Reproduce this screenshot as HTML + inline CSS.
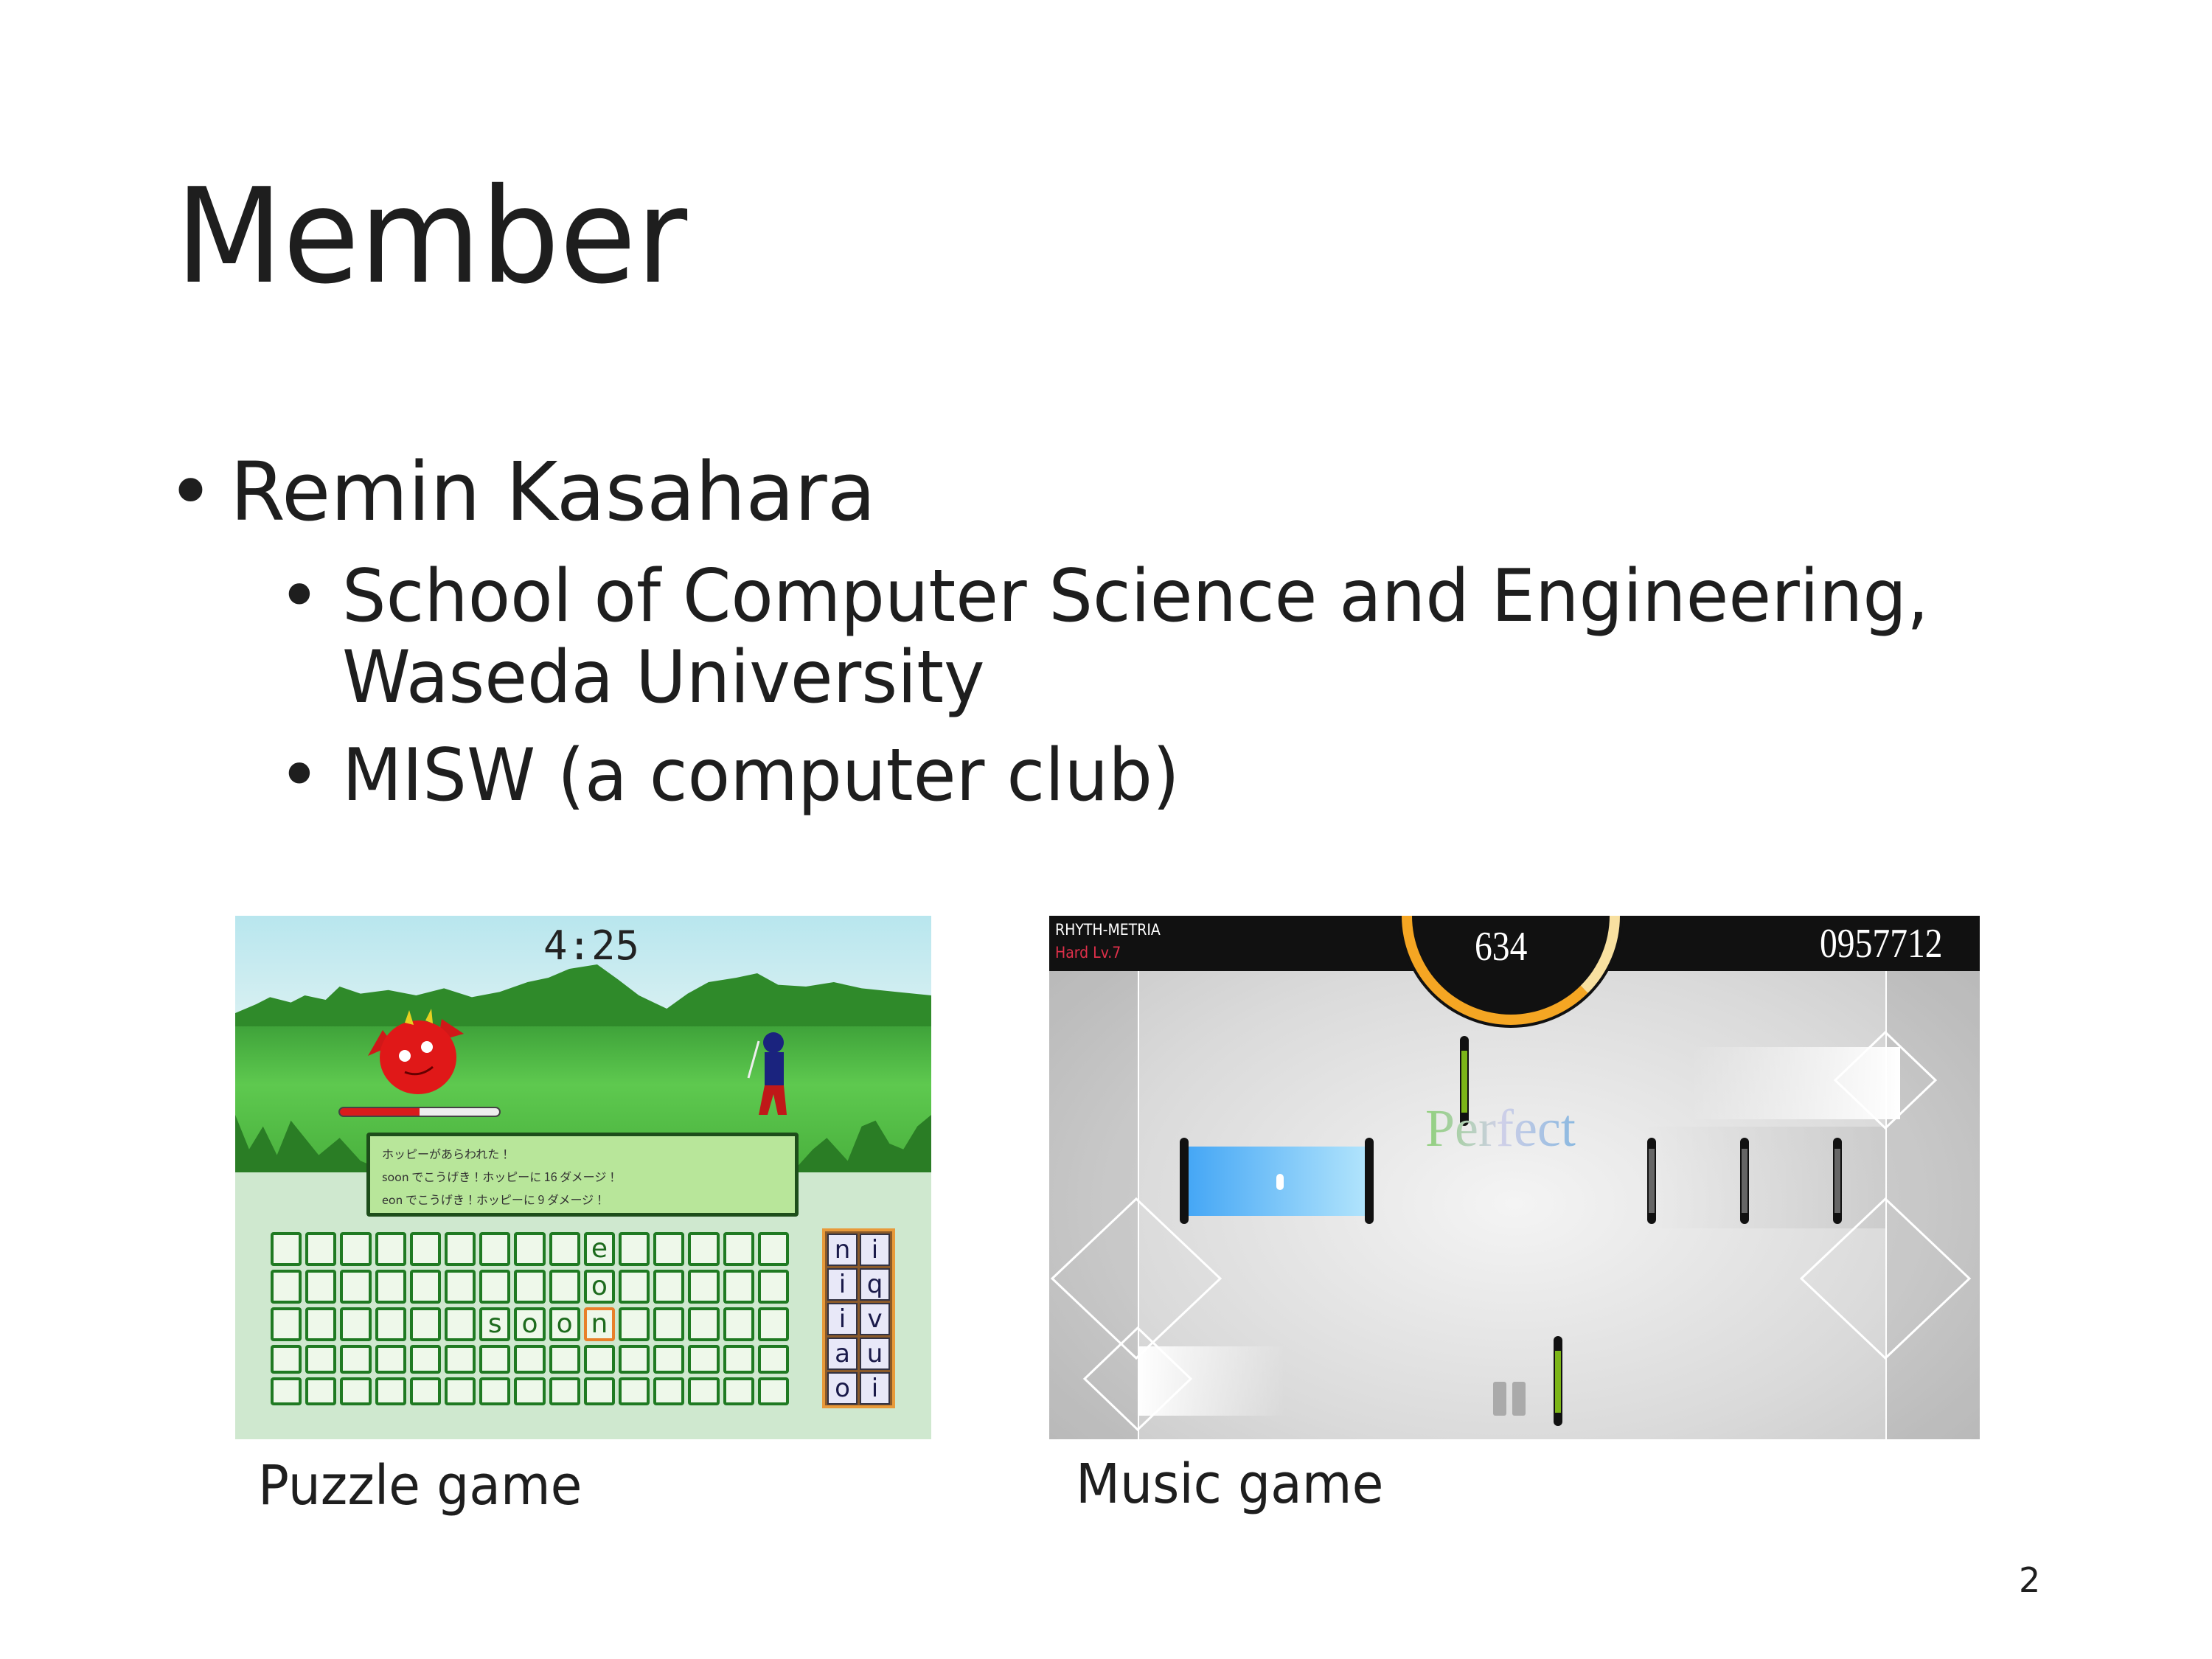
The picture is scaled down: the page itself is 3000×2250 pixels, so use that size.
<!DOCTYPE html>
<html><head><meta charset="utf-8"><style>
*{margin:0;padding:0;box-sizing:border-box}
body{width:3000px;height:2250px;background:#fff;position:relative;overflow:hidden;font-family:"DejaVu Sans","Liberation Sans",sans-serif;color:#1e1e1e}
.t{position:absolute;white-space:nowrap;line-height:1;transform-origin:left top}
.abs{position:absolute}
.c{background:#eef8ea;border:4px solid #1f7a22;border-radius:4px}
</style></head><body>
<div class="t" style="left:238px;top:232px;font-size:178px;transform:scaleX(.948)">Member</div>
<div class="t" style="left:226px;top:612px;font-size:110px">•</div>
<div class="t" style="left:312px;top:612px;font-size:110px;transform:scaleX(.98)">Remin Kasahara</div>
<div class="t" style="left:377px;top:760px;font-size:98px">•</div>
<div class="t" style="left:464px;top:760px;font-size:98px;transform:scaleX(.958)">School of Computer Science and Engineering,</div>
<div class="t" style="left:464px;top:870px;font-size:98px;transform:scaleX(.958)">Waseda University</div>
<div class="t" style="left:377px;top:1003px;font-size:98px">•</div>
<div class="t" style="left:464px;top:1003px;font-size:98px;transform:scaleX(.962)">MISW (a computer club)</div>

<!-- Puzzle game -->
<div class="abs" style="left:319px;top:1242px;width:944px;height:710px;overflow:hidden;background:#cfe8cf">
 <div class="abs" style="left:0;top:0;width:944px;height:140px;background:linear-gradient(#b8e6ee,#d8f0f2)"></div>
 <div class="abs" style="left:0;top:60px;width:944px;height:120px;background:#2f8a2a;clip-path:polygon(0 60%,3% 50%,5% 42%,8% 48%,10% 40%,13% 45%,15% 30%,18% 38%,22% 34%,26% 40%,30% 32%,34% 42%,38% 36%,42% 25%,45% 20%,48% 10%,52% 5%,55% 22%,58% 40%,62% 55%,65% 38%,68% 25%,72% 20%,75% 15%,78% 28%,82% 30%,86% 25%,90% 32%,95% 36%,100% 40%,100% 100%,0 100%)"></div>
 <div class="abs" style="left:0;top:150px;width:944px;height:198px;background:linear-gradient(#3fa33a,#5ec94f 40%,#49b03d)"></div>
 <div class="abs" style="left:0;top:270px;width:944px;height:78px;background:#2a7d25;clip-path:polygon(0 0,2% 60%,4% 20%,6% 70%,8% 10%,12% 70%,15% 40%,18% 80%,22% 100%,80% 100%,83% 60%,85% 40%,88% 80%,90% 20%,92% 10%,94% 50%,96% 60%,98% 20%,100% 0,100% 100%,0 100%)"></div>
 <div class="t abs" style="left:418px;top:14px;font-size:54px;font-family:'DejaVu Sans Mono',monospace;color:#222">4:25</div>
 <svg class="abs" style="left:170px;top:120px" width="150" height="130">
  <path d="M10 70 L30 35 L45 55 Z M140 40 L110 20 L105 50 Z" fill="#d01818"/>
  <ellipse cx="78" cy="72" rx="52" ry="50" fill="#e01818"/>
  <path d="M60 25 L66 8 L72 28 Z M88 22 L96 6 L98 26 Z" fill="#e8d020"/>
  <circle cx="60" cy="70" r="8" fill="#fff"/><circle cx="90" cy="58" r="8" fill="#fff"/>
  <path d="M60 92 Q80 100 98 85" stroke="#600" stroke-width="3" fill="none"/>
 </svg>
 <div class="abs" style="left:140px;top:259px;width:220px;height:14px;border-radius:7px;background:linear-gradient(90deg,#d81c1c 50%,#eee 50%);border:2px solid #444"></div>
 <svg class="abs" style="left:690px;top:150px" width="70" height="130">
  <path d="M20 20 L6 70" stroke="#eee" stroke-width="3"/>
  <circle cx="40" cy="22" r="14" fill="#1a237e"/>
  <rect x="28" y="35" width="26" height="45" fill="#1a237e"/>
  <path d="M28 80 L20 120 L32 120 L40 92 L46 120 L58 120 L54 80 Z" fill="#c01818"/>
 </svg>
 <div class="abs" style="left:178px;top:294px;width:586px;height:114px;background:#b8e69a;border:5px solid #1d4d1a;border-radius:4px;font-family:'Noto Sans CJK JP',sans-serif;font-size:16px;color:#333;padding:8px 16px;line-height:31px">ホッピーがあらわれた！<br>soon でこうげき！ホッピーに 16 ダメージ！<br>eon でこうげき！ホッピーに 9 ダメージ！</div>
 <div class="abs" style="left:796px;top:424px;width:99px;height:244px;background:#8a5a2a;border:4px solid #e89a3a;padding:3px;display:grid;grid-template-columns:1fr 1fr;grid-template-rows:repeat(5,1fr);gap:3px;font-size:34px;text-align:center;line-height:40px;color:#1a1a4a">
  <div style="background:#e8e8f8;border:2px solid #334">n</div><div style="background:#e8e8f8;border:2px solid #334">i</div>
  <div style="background:#e8e8f8;border:2px solid #334">i</div><div style="background:#e8e8f8;border:2px solid #334">q</div>
  <div style="background:#e8e8f8;border:2px solid #334">i</div><div style="background:#e8e8f8;border:2px solid #334">v</div>
  <div style="background:#e8e8f8;border:2px solid #334">a</div><div style="background:#e8e8f8;border:2px solid #334">u</div>
  <div style="background:#e8e8f8;border:2px solid #334">o</div><div style="background:#e8e8f8;border:2px solid #334">i</div>
 </div>
</div>
<div class="abs" style="left:367px;top:1671px;width:703px;height:235px;display:grid;grid-template-columns:repeat(15,1fr);grid-template-rows:repeat(5,1fr);gap:5px;font-size:36px;color:#1d6b1d;text-align:center;line-height:38px">
<div class="c"></div><div class="c"></div><div class="c"></div><div class="c"></div><div class="c"></div><div class="c"></div><div class="c"></div><div class="c"></div><div class="c"></div><div class="c">e</div><div class="c"></div><div class="c"></div><div class="c"></div><div class="c"></div><div class="c"></div>
<div class="c"></div><div class="c"></div><div class="c"></div><div class="c"></div><div class="c"></div><div class="c"></div><div class="c"></div><div class="c"></div><div class="c"></div><div class="c">o</div><div class="c"></div><div class="c"></div><div class="c"></div><div class="c"></div><div class="c"></div>
<div class="c"></div><div class="c"></div><div class="c"></div><div class="c"></div><div class="c"></div><div class="c"></div><div class="c">s</div><div class="c">o</div><div class="c">o</div><div class="c" style="border-color:#e8802a">n</div><div class="c"></div><div class="c"></div><div class="c"></div><div class="c"></div><div class="c"></div>
<div class="c"></div><div class="c"></div><div class="c"></div><div class="c"></div><div class="c"></div><div class="c"></div><div class="c"></div><div class="c"></div><div class="c"></div><div class="c"></div><div class="c"></div><div class="c"></div><div class="c"></div><div class="c"></div><div class="c"></div>
<div class="c"></div><div class="c"></div><div class="c"></div><div class="c"></div><div class="c"></div><div class="c"></div><div class="c"></div><div class="c"></div><div class="c"></div><div class="c"></div><div class="c"></div><div class="c"></div><div class="c"></div><div class="c"></div><div class="c"></div>
</div>

<!-- Music game -->
<div class="abs" style="left:1423px;top:1242px;width:1262px;height:710px;overflow:hidden;background:radial-gradient(ellipse at 50% 55%,#f4f4f4,#dadada 60%,#c4c4c4)">
 <div class="abs" style="left:0;top:0;width:120px;height:710px;background:rgba(0,0,0,0.08)"></div>
 <div class="abs" style="left:1134px;top:0;width:128px;height:710px;background:rgba(0,0,0,0.08)"></div>
 <div class="abs" style="left:120px;top:0;width:2px;height:710px;background:#fff"></div>
 <div class="abs" style="left:1134px;top:0;width:2px;height:710px;background:#fff"></div>
 <div class="abs" style="left:800px;top:286px;width:334px;height:138px;background:linear-gradient(90deg,rgba(0,0,0,0),rgba(0,0,0,0.07))"></div>
 <div class="abs" style="left:870px;top:178px;width:284px;height:98px;background:linear-gradient(90deg,rgba(255,255,255,0),#fff)"></div>
 <div class="abs" style="left:120px;top:584px;width:200px;height:94px;background:linear-gradient(90deg,#fff,rgba(255,255,255,0))"></div>
 <svg class="abs" style="left:0;top:0" width="1262" height="710" fill="none" stroke="#fff" stroke-width="3">
  <path d="M4 492 L118 384 L232 492 L118 600 Z"/>
  <path d="M1020 492 L1134 384 L1248 492 L1134 600 Z"/>
  <path d="M1066 223 L1134 158 L1202 223 L1134 288 Z"/>
  <path d="M48 628 L120 559 L192 628 L120 697 Z"/>
 </svg>
 <div class="abs" style="left:0;top:0;width:1262px;height:75px;background:#111"></div>
 <div class="abs" style="left:478px;top:-148px;width:296px;height:296px;border-radius:50%;background:#111;border:14px solid #f5a623;border-right-color:#f8e0a0;box-shadow:0 0 0 4px #111"></div>
 <div class="t abs" style="left:8px;top:9px;font-size:21px;color:#fff;font-family:'DejaVu Sans Condensed','DejaVu Sans',sans-serif">RHYTH-METRIA</div>
 <div class="t abs" style="left:8px;top:40px;font-size:21px;color:#e0304a;font-family:'DejaVu Sans Condensed','DejaVu Sans',sans-serif">Hard Lv.7</div>
 <div class="t abs" style="left:577px;top:14px;font-size:56px;color:#fff;font-family:'Liberation Serif',serif;transform:scaleX(.85)">634</div>
 <div class="t abs" style="left:1045px;top:10px;font-size:56px;color:#fff;font-family:'Liberation Serif',serif;transform:scaleX(.85)">0957712</div>
 <div class="abs" style="left:182px;top:313px;width:252px;height:94px;background:linear-gradient(90deg,#42a5f5,#b3e5fc)"></div>
 <div class="abs" style="left:177px;top:301px;width:12px;height:117px;background:#111;border-radius:6px"></div>
 <div class="abs" style="left:428px;top:301px;width:12px;height:117px;background:#111;border-radius:6px"></div>
 <div class="abs" style="left:308px;top:350px;width:10px;height:22px;background:#fff;border-radius:5px"></div>
 <div class="abs" style="left:557px;top:163px;width:12px;height:122px;background:#111;border-radius:6px"></div>
 <div class="abs" style="left:559px;top:183px;width:8px;height:84px;background:#7cb518"></div>
 <div class="abs" style="left:684px;top:570px;width:12px;height:122px;background:#111;border-radius:6px"></div>
 <div class="abs" style="left:686px;top:590px;width:8px;height:84px;background:#7cb518"></div>
 <div class="abs" style="left:811px;top:301px;width:12px;height:117px;background:#111;border-radius:6px"></div>
 <div class="abs" style="left:937px;top:301px;width:12px;height:117px;background:#111;border-radius:6px"></div>
 <div class="abs" style="left:1063px;top:301px;width:12px;height:117px;background:#111;border-radius:6px"></div>
 <div class="abs" style="left:813px;top:316px;width:8px;height:87px;background:#666"></div>
 <div class="abs" style="left:939px;top:316px;width:8px;height:87px;background:#666"></div>
 <div class="abs" style="left:1065px;top:316px;width:8px;height:87px;background:#666"></div>
 <div class="abs" style="left:602px;top:632px;width:18px;height:46px;background:#aaa;border-radius:3px"></div>
 <div class="abs" style="left:628px;top:632px;width:18px;height:46px;background:#aaa;border-radius:3px"></div>
 <div class="t abs" style="left:510px;top:252px;font-size:72px;font-family:'Liberation Serif',serif;background:linear-gradient(90deg,#8fd07a,#d0d0e8,#8ab8e0);-webkit-background-clip:text;color:transparent">Perfect</div>
</div>

<div class="t" style="left:350px;top:1978px;font-size:74px;transform:scaleX(.94)">Puzzle game</div>
<div class="t" style="left:1459px;top:1976px;font-size:74px;transform:scaleX(.94)">Music game</div>
<div class="t" style="left:2738px;top:2120px;font-size:46px">2</div>
</body></html>
